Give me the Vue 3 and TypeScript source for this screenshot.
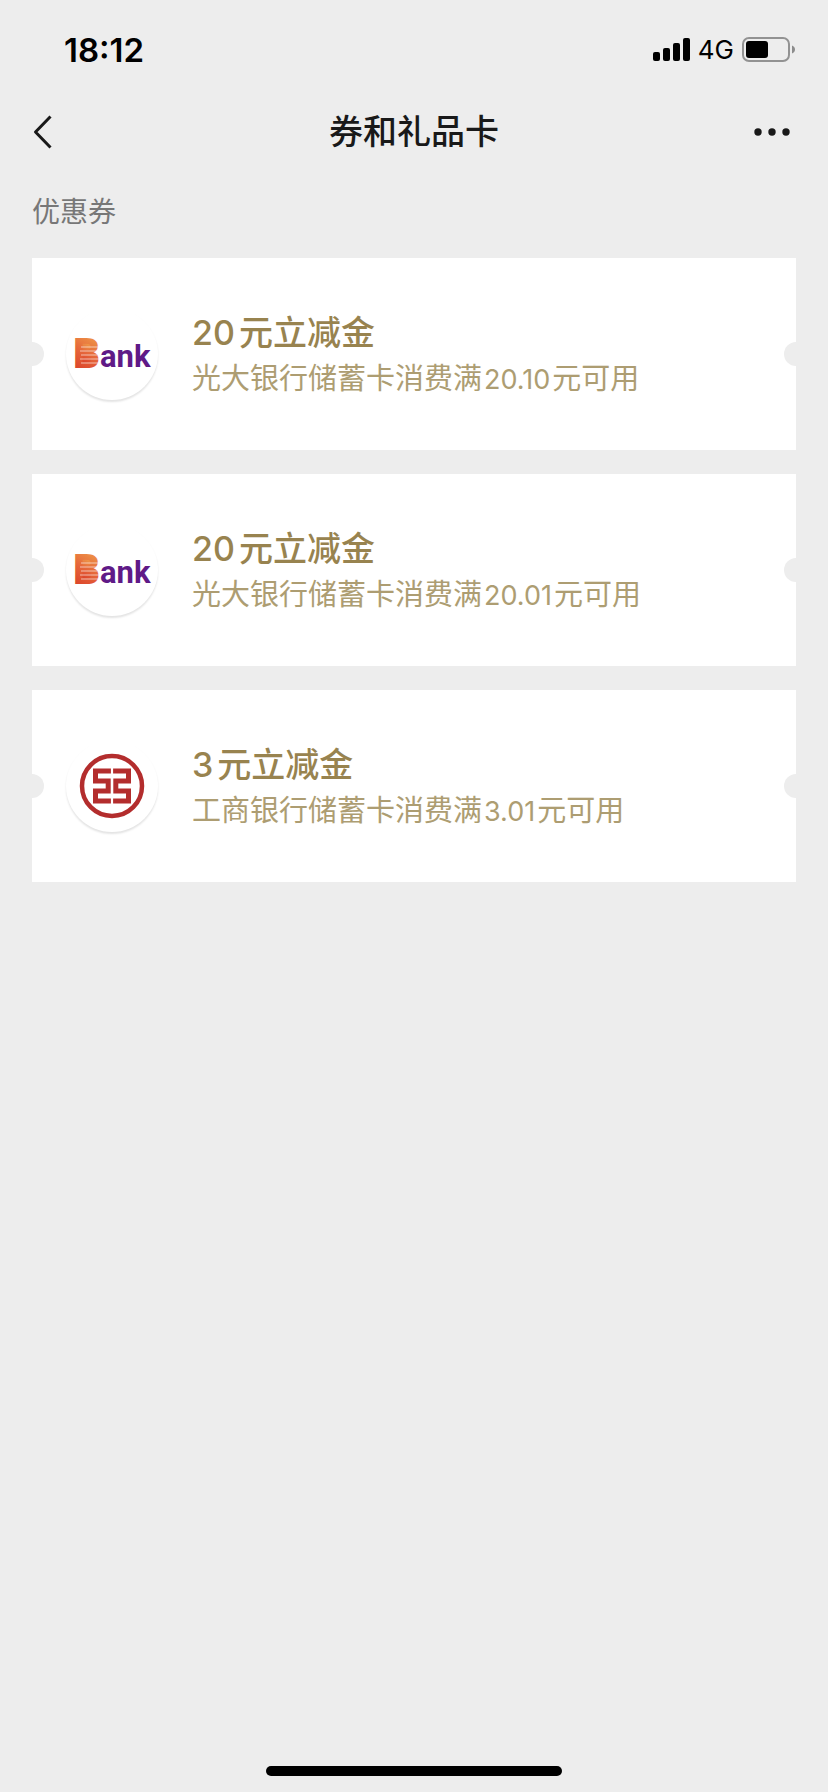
<script setup lang="ts">
interface Coupon {
  id: number
  bank: 'ceb' | 'icbc'
  amount: string
  bankName: string
  threshold: string
}

const coupons: Coupon[] = [
  { id: 1, bank: 'ceb', amount: '20', bankName: '光大银行', threshold: '20.10' },
  { id: 2, bank: 'ceb', amount: '20', bankName: '光大银行', threshold: '20.01' },
  { id: 3, bank: 'icbc', amount: '3', bankName: '工商银行', threshold: '3.01' },
]
</script>

<template>
  <div class="screen">
    <div class="status">
      <time class="clock">18:12</time>
      <div class="indicators">
        <svg class="signal" width="37" height="24" viewBox="0 0 37 24" aria-hidden="true">
          <rect x="0" y="14" width="7" height="9" rx="2" />
          <rect x="10" y="10" width="7" height="13" rx="2" />
          <rect x="20" y="5" width="7" height="18" rx="2" />
          <rect x="30" y="0" width="7" height="23" rx="2" />
        </svg>
        <span class="network">4G</span>
        <svg width="53" height="26" viewBox="0 0 53 26" aria-hidden="true">
          <rect x="1" y="1" width="46" height="23" rx="6" fill="none" stroke="#929292" stroke-width="2" />
          <rect x="4" y="4" width="22" height="17" rx="3" fill="#000" />
          <path d="M50 8.500c1.900.7 3 2.200 3 4s-1.100 3.300-3 4z" fill="#8c8c8c" />
        </svg>
      </div>
    </div>

    <header class="nav">
      <button class="nav-button" type="button" aria-label="返回">
        <svg width="20" height="36" viewBox="0 0 20 36" aria-hidden="true">
          <path d="M18.500 2.500 3.500 18l15 15.500" fill="none" stroke="#191919" stroke-width="3" stroke-linejoin="round" />
        </svg>
      </button>
      <h1 class="nav-title">券和礼品卡</h1>
      <button class="nav-button more" type="button" aria-label="更多">
        <svg width="36" height="8" viewBox="0 0 36 8" aria-hidden="true">
          <circle cx="4" cy="4" r="3.700" />
          <circle cx="18" cy="4" r="3.700" />
          <circle cx="32" cy="4" r="3.700" />
        </svg>
      </button>
    </header>

    <main class="content">
      <h2 class="section-title">优惠券</h2>
      <ul class="coupons">
        <li v-for="c in coupons" :key="c.id" class="coupon">
          <div class="logo">
            <svg v-if="c.bank === 'ceb'" width="92" height="92" viewBox="0 0 92 92" role="img" aria-label="光大银行">
              <defs>
                <linearGradient :id="'flame' + c.id" x1="0.6" y1="0" x2="0.3" y2="1">
                  <stop offset="0" stop-color="#f0a04a" />
                  <stop offset="0.5" stop-color="#e5653a" />
                  <stop offset="1" stop-color="#d83a26" />
                </linearGradient>
              </defs>
              <rect x="13" y="33" width="14" height="24" :fill="`url(#flame${c.id})`" />
              <text x="7" y="60" class="mark" :fill="`url(#flame${c.id})`">B</text>
              <path d="M15 39h17M14 43h18M15 47h16M14 51h19M15 55h17" stroke="#fff" stroke-opacity="0.6" stroke-width="1.200" />
              <text x="34" y="59" class="wordmark">ank</text>
            </svg>
            <svg v-else width="92" height="92" viewBox="0 0 92 92" role="img" aria-label="工商银行">
              <g fill="none" stroke="#b32d2d" stroke-width="5">
                <circle cx="46" cy="46" r="30" stroke-width="4.500" />
                <path d="M44.900 31H29.500V41H42.200V51H29.500V61H44.900" />
                <path d="M47.100 31H62.500V41H49.800V51H62.500V61H47.100" />
              </g>
            </svg>
          </div>
          <div class="info">
            <h3 class="name"><span class="figure">{{ c.amount }}</span>元立减金</h3>
            <p class="terms">{{ c.bankName }}储蓄卡消费满<span class="inner-figure">{{ c.threshold }}</span>元可用</p>
          </div>
        </li>
      </ul>
    </main>

    <div class="home-bar"></div>
  </div>
</template>

<style>
body {
  margin: 0;
  background: #ededed;
}
</style>

<style scoped>
.screen {
  display: flex;
  flex-direction: column;
  box-sizing: border-box;
  min-height: 100vh;
  padding-bottom: 16px;
  background: #ededed;
  color: #191919;
  font-family: Inter, "Noto Sans CJK SC", sans-serif;
}

.status {
  display: flex;
  align-items: center;
  justify-content: space-between;
  height: 88px;
  padding: 12px 33px 0 64px;
  box-sizing: border-box;
  color: #000;
}

.clock {
  font-size: 33px;
  font-weight: 600;
}

.indicators {
  display: flex;
  align-items: center;
  gap: 8px;
}

.network {
  font-size: 26px;
  line-height: 26px;
  font-weight: 400;
}

.nav {
  display: grid;
  grid-template-columns: 1fr auto 1fr;
  align-items: center;
  height: 88px;
  padding: 0 32px;
}

.nav-button {
  display: flex;
  align-items: center;
  justify-self: start;
  height: 88px;
  padding: 0;
  border: 0;
  background: none;
}

.nav-button.more {
  justify-self: end;
  padding: 0 6px;
  fill: #191919;
}

.nav-title {
  margin: 0;
  font-size: 34px;
  line-height: 48px;
  font-weight: 500;
}

.content {
  flex: 1;
  padding: 16px 32px;
}

.section-title {
  margin: 0 0 26px;
  font-size: 28px;
  line-height: 40px;
  font-weight: 400;
  color: #777;
}

.coupons {
  display: flex;
  flex-direction: column;
  gap: 24px;
  margin: 0;
  padding: 0;
  list-style: none;
}

.coupon {
  position: relative;
  display: flex;
  align-items: center;
  gap: 34px;
  box-sizing: border-box;
  min-height: 192px;
  padding: 0 34px;
  overflow: hidden;
  background: #fff;
}

/* Ticket notches on the two short edges */
.coupon::before,
.coupon::after {
  content: "";
  position: absolute;
  top: 50%;
  width: 24px;
  height: 24px;
  margin-top: -12px;
  border-radius: 50%;
  background: #ededed;
}

.coupon::before {
  left: -12px;
}

.coupon::after {
  right: -12px;
}

.logo {
  flex: none;
  width: 92px;
  height: 92px;
  border-radius: 50%;
  background: #fff;
  box-shadow: 0 2px 2px rgba(0, 0, 0, 0.11);
}

.logo svg {
  display: block;
}

.mark {
  font-family: Roboto, sans-serif;
  font-size: 42px;
  font-weight: 900;
}

.wordmark {
  font-family: Roboto, sans-serif;
  font-size: 31px;
  font-weight: 700;
  fill: #5f1a87;
}

.info {
  padding-top: 2px;
}

.name {
  margin: 0;
  font-size: 34px;
  line-height: 48px;
  font-weight: 500;
  color: #98834f;
}

.terms {
  margin: 0;
  font-size: 29px;
  line-height: 44px;
  color: #ad9d72;
}

.figure {
  margin-right: 4px;
}

.inner-figure {
  margin: 0 2px;
  font-size: 27px;
}

.home-bar {
  align-self: center;
  width: 296px;
  height: 10px;
  border-radius: 5px;
  background: #000;
}
</style>
